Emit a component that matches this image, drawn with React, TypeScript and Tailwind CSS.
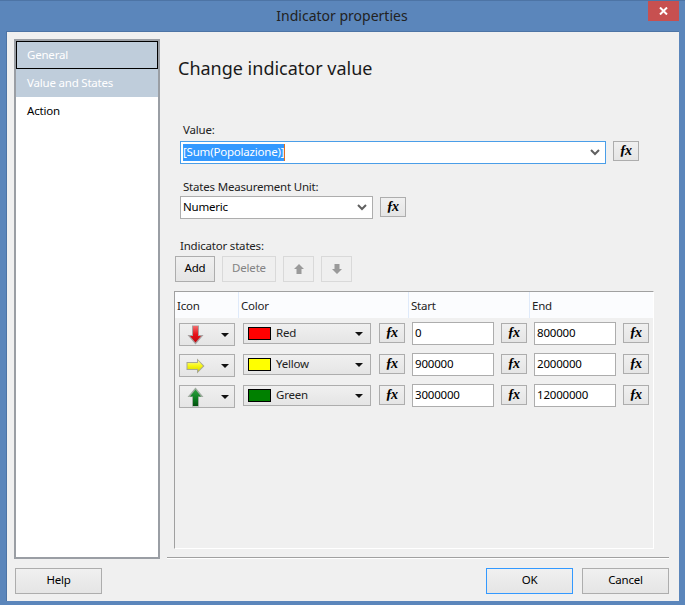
import React from "react";

const btn = "flex items-center justify-center border border-[#adadad] bg-gradient-to-b from-[#f0f0f0] to-[#e5e5e5] text-black";

function Fx({ cls = "" }: { cls?: string }) {
  return (
    <div className={`${btn} w-[26px] h-[20px] ${cls}`}>
      <span className="font-['Liberation_Serif',serif] italic font-bold text-[14px] leading-none tracking-[-1.5px] pr-[2px] -mt-[1px]">ƒx</span>
    </div>
  );
}

function Caret() {
  return (
    <svg width="8" height="4" viewBox="0 0 8 4" className="shrink-0">
      <path d="M0 0H8L4 4Z" fill="#111" />
    </svg>
  );
}

function Chevron() {
  return (
    <svg width="10" height="7" viewBox="0 0 10 7" className="shrink-0">
      <path d="M1 1L5 5L9 1" fill="none" stroke="#606060" strokeWidth="2" />
    </svg>
  );
}

function Down() {
  return (
    <svg width="17" height="20" viewBox="0 0 17 20">
      <defs>
        <linearGradient id="dg" x1="0" y1="0" x2="0" y2="1">
          <stop offset="0" stopColor="#f07070" />
          <stop offset="0.5" stopColor="#e81018" />
          <stop offset="1" stopColor="#c00810" />
        </linearGradient>
      </defs>
      <path d="M5 0.5H12V10H16.5L8.5 19.5L0.5 10H5Z" fill="#a8a0a0" />
      <path d="M6 1H11V11H14L8.5 17.5L3 11H6Z" fill="url(#dg)" />
    </svg>
  );
}

function Right() {
  return (
    <svg width="19" height="16" viewBox="0 0 19 16">
      <defs>
        <linearGradient id="yg" x1="0" y1="0" x2="0" y2="1">
          <stop offset="0" stopColor="#f8f8a0" />
          <stop offset="0.5" stopColor="#f8f810" />
          <stop offset="1" stopColor="#d8d800" />
        </linearGradient>
      </defs>
      <path d="M0.5 4H11V0.5L18.5 8L11 15.5V12H0.5Z" fill="#a8a890" />
      <path d="M1.5 5H12V2.5L17 8L12 13V11H1.5Z" fill="url(#yg)" />
    </svg>
  );
}

function Up() {
  return (
    <svg width="17" height="20" viewBox="0 0 17 20">
      <defs>
        <linearGradient id="gg" x1="0" y1="0" x2="0" y2="1">
          <stop offset="0" stopColor="#30a040" />
          <stop offset="0.6" stopColor="#0a7a1e" />
          <stop offset="1" stopColor="#045010" />
        </linearGradient>
      </defs>
      <path d="M8.5 0.5L16.5 10H12V19.5H5V10H0.5Z" fill="#a0aca0" />
      <path d="M8.5 2.5L14 9.5H11V19H6V9.5H3Z" fill="url(#gg)" />
    </svg>
  );
}

function StateRow({ icon, swatch, name, start, end }: { icon: React.ReactNode; swatch: string; name: string; start: string; end: string }) {
  return (
    <div className="flex items-start h-[31px]">
      <div className={`${btn} w-[56px] h-[23px] ml-[4px] mt-[1px] !justify-start`}>
        <div className="w-[31px] flex justify-center">{icon}</div>
        <div className="ml-[10px]"><Caret /></div>
      </div>
      <div className={`${btn} w-[128px] h-[21px] ml-[8px] mt-[1px] !justify-start`}>
        <div className="w-[23px] h-[13px] ml-[4px] border border-black" style={{ backgroundColor: swatch }} />
        <span className="ml-[5px] flex-1 text-left text-[#222] pb-[2px]">{name}</span>
        <div className="mr-[7px]"><Caret /></div>
      </div>
      <Fx cls="ml-[8px] mt-[1px]" />
      <div className="w-[82px] h-[23px] ml-[7px] border border-[#adadad] bg-white pl-[2px] leading-[19px] text-black">{start}</div>
      <Fx cls="ml-[7px] mt-[1px]" />
      <div className="w-[82px] h-[23px] ml-[7px] border border-[#adadad] bg-white pl-[2px] leading-[19px] text-black">{end}</div>
      <Fx cls="ml-[7px] mt-[1px]" />
    </div>
  );
}

export default function App() {
  return (
    <div className="w-[685px] h-[605px] bg-[#5b86bb] flex flex-col font-['Noto_Sans',sans-serif] text-[11.5px] tracking-[-0.2px] text-black overflow-hidden border-t border-[#4d74a5]">
      <div className="h-[30px] shrink-0 grid grid-cols-[1fr_auto_1fr]">
        <div />
        <div className="text-[14px] tracking-normal leading-[30px] text-[#222] -ml-[1px]">Indicator properties</div>
        <div className="flex justify-end pr-[6px]">
          <div className="w-[31px] h-[20px] bg-[#c75050] flex items-center justify-center">
            <svg width="9" height="8" viewBox="0 0 9 8"><path d="M1 0.5L8 7.5M8 0.5L1 7.5" stroke="#fff" strokeWidth="2" /></svg>
          </div>
        </div>
      </div>

      <div className="mx-[6px] w-[673px] h-[570px] bg-[#f0f0f0] border-t border-l border-[#4d74a5] flex flex-col">
        <div className="flex h-[525px] pl-[7px] pt-[7px]">
          <div className="w-[146px] h-[520px] bg-white border-2 border-[#9a9ea4] flex flex-col shrink-0 leading-[26px]">
            <div className="h-[28px] bg-[#bfcddb] text-white pl-[10px] border border-black">General</div>
            <div className="h-[28px] bg-[#bfcddb] text-white pl-[11px] leading-[28px]">Value and States</div>
            <div className="h-[28px] pl-[11px] leading-[28px]">Action</div>
          </div>

          <div className="flex-1 flex flex-col pl-[14px]">
            <div className="text-[18px] tracking-normal leading-[24px] mt-[17px] ml-[4px] text-[#1a1a1a]">Change indicator value</div>

            <div className="ml-[9px] mt-[42px] leading-[16px] text-[#222]">Value:</div>
            <div className="flex items-start mt-[3px] ml-[6px]">
              <div className="w-[426px] h-[23px] bg-white border border-[#4a9ee8] flex items-center pl-[2px] pr-[5px]">
                <span className="bg-[#3399ff] text-white leading-[15px] h-[17px]">[Sum(Popolazione)]</span>
                <span className="w-[1px] h-[17px] bg-[#e07020]" />
                <div className="flex-1" />
                <Chevron />
              </div>
              <Fx cls="ml-[7px]" />
            </div>

            <div className="ml-[9px] mt-[15px] leading-[16px] text-[#222]">States Measurement Unit:</div>
            <div className="flex items-start mt-[1px] ml-[6px]">
              <div className="w-[193px] h-[23px] bg-white border border-[#adadad] flex items-center pl-[2px] pr-[5px] justify-between">
                <span className="pb-[2px]">Numeric</span>
                <Chevron />
              </div>
              <Fx cls="ml-[7px] mt-[1px]" />
            </div>

            <div className="ml-[6px] mt-[19px] leading-[16px] text-[#222]">Indicator states:</div>
            <div className="flex mt-[2px] ml-[1px] gap-[7px]">
              <div className={`${btn} w-[40px] h-[26px] pb-[2px]`}>Add</div>
              <div className="w-[54px] h-[26px] border border-[#d9d9d9] bg-[#efefef] flex items-center justify-center text-[#838383] pb-[2px]">Delete</div>
              <div className="w-[31px] h-[26px] border border-[#d9d9d9] bg-[#efefef] flex items-center justify-center">
                <svg width="10" height="10" viewBox="0 0 10 10"><path d="M5 0L10 5H7.5V10H2.5V5H0Z" fill="#9a9a9a" /></svg>
              </div>
              <div className="w-[31px] h-[26px] border border-[#d9d9d9] bg-[#efefef] flex items-center justify-center">
                <svg width="10" height="10" viewBox="0 0 10 10"><path d="M2.5 0H7.5V5H10L5 10L0 5H2.5Z" fill="#9a9a9a" /></svg>
              </div>
            </div>

            <div className="w-[480px] h-[258px] mt-[9px] border-t border-l border-[#a0a0a0] border-r border-b border-r-white border-b-white flex flex-col">
              <div className="h-[26px] shrink-0 bg-[#fbfcfe] flex leading-[28px] text-[#222] mb-[4px]">
                <div className="w-[64px] pl-[2px] border-r border-[#dfeafa]">Icon</div>
                <div className="w-[170px] pl-[2px] border-r border-[#dfeafa]">Color</div>
                <div className="w-[121px] pl-[2px] border-r border-[#dfeafa]">Start</div>
                <div className="flex-1 pl-[2px]">End</div>
              </div>
              <StateRow icon={<Down />} swatch="#ff0000" name="Red" start="0" end="800000" />
              <StateRow icon={<Right />} swatch="#ffff00" name="Yellow" start="900000" end="2000000" />
              <StateRow icon={<Up />} swatch="#008000" name="Green" start="3000000" end="12000000" />
            </div>
          </div>
        </div>

        <div className="ml-[160px] w-[502px] h-[2px] bg-[#a0a0a0] border-b border-white shrink-0" />

        <div className="flex items-start pl-[8px] pt-[9px]">
          <div className={`${btn} w-[87px] h-[26px] pb-[2px]`}>Help</div>
          <div className="flex-1" />
          <div className={`${btn} w-[87px] h-[26px] pb-[2px] !border-[#3399ff]`}>OK</div>
          <div className={`${btn} w-[87px] h-[26px] pb-[2px] ml-[9px] mr-[10px]`}>Cancel</div>
        </div>
      </div>
    </div>
  );
}
